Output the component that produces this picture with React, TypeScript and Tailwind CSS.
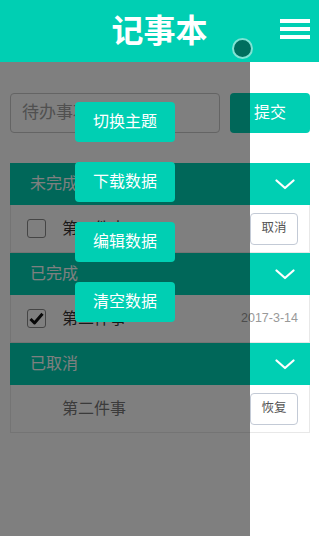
import { useState } from "react";

const TEAL = "bg-[#00cfb3]";

interface Todo {
  text: string;
  date?: string;
  done?: boolean;
}

const Chevron = () => (
  <svg width="20" height="11" viewBox="0 0 20 11" fill="none">
    <path d="M1.5 1.5 L10 9 L18.5 1.5" stroke="white" strokeWidth="2.2" strokeLinecap="round" strokeLinejoin="round" />
  </svg>
);

const Check = ({ checked }: { checked?: boolean }) => (
  <span className="w-[19px] h-[19px] rounded-[3px] border border-[#8a8a8a] bg-white flex items-center justify-center shrink-0">
    {checked && (
      <svg width="15" height="13" viewBox="0 0 15 13">
        <path d="M1.5 7 L5.5 11 L13.5 1.8" stroke="#111" strokeWidth="3" fill="none" strokeLinejoin="round" />
      </svg>
    )}
  </span>
);

const SectionHead = ({ title }: { title: string }) => (
  <div className={`h-[42px] ${TEAL} flex items-center justify-between pl-5 pr-[15px]`}>
    <span className="text-[16px] text-white">{title}</span>
    <Chevron />
  </div>
);

const SmallBtn = ({ label }: { label: string }) => (
  <button className="w-[48px] h-[32px] rounded-[4px] border border-[#c3cad6] bg-white text-[12.5px] text-[#555]">
    {label}
  </button>
);

const Row = ({ children }: { children: React.ReactNode }) => (
  <div className="h-[48px] flex items-center border-x border-b border-[#e8e8e8] pl-[16px] pr-[11px] bg-white">
    {children}
  </div>
);

export default function App() {
  const [open] = useState(true);
  const pending: Todo[] = [{ text: "第一件事" }];
  const done: Todo[] = [{ text: "第二件事", date: "2017-3-14", done: true }];
  const cancelled: Todo[] = [{ text: "第二件事" }];

  return (
    <div
      className="relative w-[319px] h-[536px] overflow-hidden bg-white text-[#333]"
      style={{ fontFamily: '"Liberation Sans", "Noto Sans CJK SC", sans-serif' }}
    >
      <header className={`relative h-[62px] ${TEAL} flex items-center justify-center`}>
        <h1 className="text-[32px] font-bold text-white leading-none">记事本</h1>
        <div className="absolute right-[9px] top-[19px] w-[30px] flex flex-col gap-[4px]">
          <span className="h-[4px] bg-white" />
          <span className="h-[3.5px] bg-white" />
          <span className="h-[4px] bg-white" />
        </div>
      </header>

      <main className="pl-[10px] pr-[9px]">
        <div className="flex gap-[10px] mt-[31px]">
          <input
            className="flex-1 min-w-0 h-[40px] rounded-[4px] border border-[#c8c8c8] px-[11px] text-[17px] outline-none placeholder:text-[#a0a0a0]"
            placeholder="待办事项"
          />
          <button className={`w-[80px] h-[40px] rounded-[4px] ${TEAL} text-white text-[16px]`}>提交</button>
        </div>

        <section className="mt-[30px]">
          <SectionHead title="未完成" />
          {pending.map((t, i) => (
            <Row key={i}>
              <Check />
              <span className="ml-[16px] text-[16px] text-[#333] flex-1">{t.text}</span>
              <SmallBtn label="取消" />
            </Row>
          ))}
          <SectionHead title="已完成" />
          {done.map((t, i) => (
            <Row key={i}>
              <Check checked={t.done} />
              <span className="ml-[16px] text-[16px] text-[#333] flex-1">{t.text}</span>
              <span className="text-[12.5px] text-[#999]">{t.date}</span>
            </Row>
          ))}
          <SectionHead title="已取消" />
          {cancelled.map((t, i) => (
            <Row key={i}>
              <span className="ml-[35px] text-[16px] text-[#777] flex-1">{t.text}</span>
              <SmallBtn label="恢复" />
            </Row>
          ))}
        </section>
      </main>

      {open && (
        <div className="absolute left-0 top-[62px] bottom-0 w-[250px] bg-black/50 flex flex-col items-center pt-[40px] gap-[20px]">
          {["切换主题", "下载数据", "编辑数据", "清空数据"].map((l) => (
            <button key={l} className={`w-[100px] h-[40px] rounded-[4px] ${TEAL} text-white text-[16px]`}>
              {l}
            </button>
          ))}
        </div>
      )}

      <span className="absolute left-[232px] top-[38px] w-[21px] h-[21px] rounded-full bg-[#006e5e] border-2 border-[#7fe3d4]" />
    </div>
  );
}
